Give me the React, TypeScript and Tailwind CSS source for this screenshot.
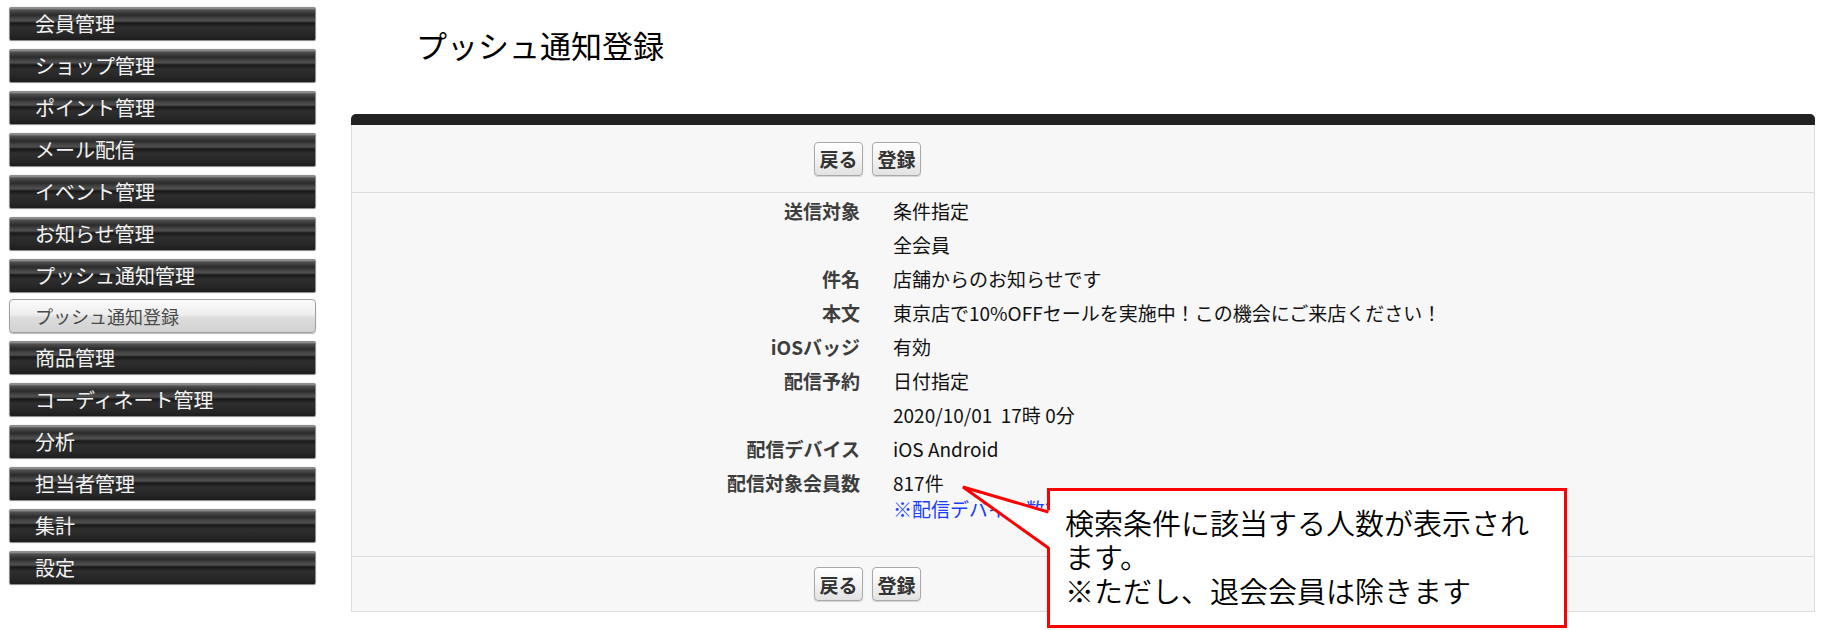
import React from "react";

const menuTop = ["会員管理", "ショップ管理", "ポイント管理", "メール配信", "イベント管理", "お知らせ管理", "プッシュ通知管理"];
const menuBottom = ["商品管理", "コーディネート管理", "分析", "担当者管理", "集計", "設定"];

const darkItem =
  "h-[34px] flex items-center pl-[25px] text-[20px] leading-none text-[#f2f2f2] border border-[#8f8f8f] rounded-[2px] shadow-[0_0_1px_#999] bg-[linear-gradient(to_bottom,#9b9b9b_0%,#4e4e4e_7%,#2b2b2b_22%,#474747_34%,#4f4f4f_40%,#181818_47%,#2e2e2e_60%,#262626_85%,#1c1c1c_100%)]";

function Btn({ label }: { label: string }) {
  return (
    <button className="w-[49px] h-[34px] flex items-center justify-center rounded-[4px] border border-[#a9a9a9] bg-[linear-gradient(to_bottom,#ffffff_0%,#f3f3f3_50%,#e2e2e2_100%)] shadow-[0_1px_1px_rgba(0,0,0,0.15)] text-[19px] font-bold text-[#333] leading-none">
      {label}
    </button>
  );
}

function Row({ label, children }: { label: string; children: React.ReactNode }) {
  return (
    <>
      <div className="text-right font-bold text-[#3d3d3d] text-[19px] leading-[26px] py-[4px]">{label}</div>
      <div className="text-[#111] text-[19px] leading-[26px] py-[4px]">{children}</div>
    </>
  );
}

export default function App() {
  return (
    <div className="relative w-[1828px] h-[630px] overflow-hidden bg-white font-['Noto_Sans_CJK_JP','Liberation_Sans',sans-serif]">
      <div className="flex">
        {/* Sidebar */}
        <div className="w-[316px] pl-[9px] pt-[7px] flex flex-col gap-[8px] shrink-0">
          {menuTop.map((m) => (
            <div key={m} className={darkItem}>
              {m}
            </div>
          ))}
          <div className="-mt-[2px] h-[34px] flex items-center pl-[25px] text-[18px] leading-none text-[#4a4a4a] border border-[#a0a0a0] rounded-[4px] shadow-[0_1px_1px_#bbb] bg-[linear-gradient(to_bottom,#fbfbfb_0%,#eeeeee_45%,#dcdcdc_55%,#d2d2d2_100%)]">
            プッシュ通知登録
          </div>
          {menuBottom.map((m) => (
            <div key={m} className={darkItem}>
              {m}
            </div>
          ))}
        </div>

        {/* Main */}
        <div className="flex-1 ml-[35px] mr-[13px]">
          <h1 className="pt-[26px] pl-[65px] text-[31px] leading-[38px] text-black font-normal">プッシュ通知登録</h1>
          <div className="mt-[50px]">
            <div className="h-[11px] bg-[#222] rounded-t-[5px]" />
            <div className="border-x border-b border-[#dedede] bg-[#f7f7f7]">
              <div className="h-[68px] flex items-center gap-[9px] pl-[462px] border-b border-[#dcdcdc]">
                <Btn label="戻る" />
                <Btn label="登録" />
              </div>
              <div className="grid grid-cols-[508px_1fr] gap-x-[33px] pt-[1px] pb-[30px]">
                <Row label="送信対象">条件指定</Row>
                <Row label="">全会員</Row>
                <Row label="件名">店舗からのお知らせです</Row>
                <Row label="本文">東京店で10%OFFセールを実施中！この機会にご来店ください！</Row>
                <Row label="iOSバッジ">有効</Row>
                <Row label="配信予約">日付指定</Row>
                <Row label="">2020/10/01{"\u00a0\u00a0"}17時{"\u00a0"}0分</Row>
                <Row label="配信デバイス">iOS Android</Row>
                <Row label="配信対象会員数">
                  <div>817件</div>
                  <div className="text-[#1a3cff] whitespace-nowrap">※配信デバイス数で</div>
                </Row>
              </div>
              <div className="h-[55px] flex items-center gap-[9px] pl-[462px] border-t border-[#dcdcdc]">
                <Btn label="戻る" />
                <Btn label="登録" />
              </div>
            </div>
          </div>
        </div>
      </div>

      {/* Callout tail */}
      <svg className="absolute left-[955px] top-[478px] w-[100px] h-[80px] z-20" viewBox="0 0 100 80">
        <polygon points="8,9 97,33 97,71" fill="#ffffff" />
        <polyline points="93.5,34 8,9 93.5,70" fill="none" stroke="#ff0000" strokeWidth="3" strokeLinejoin="miter" />
      </svg>
      {/* Callout box */}
      <div className="absolute left-[1047px] top-[488px] w-[520px] h-[140px] border-[3px] border-[#ff0000] bg-white z-10 pl-[15px] pt-[14px] text-[29px] leading-[34px] text-black font-[350]">
        検索条件に該当する人数が表示され
        <br />
        ます。
        <br />
        ※ただし、退会会員は除きます
      </div>
    </div>
  );
}
